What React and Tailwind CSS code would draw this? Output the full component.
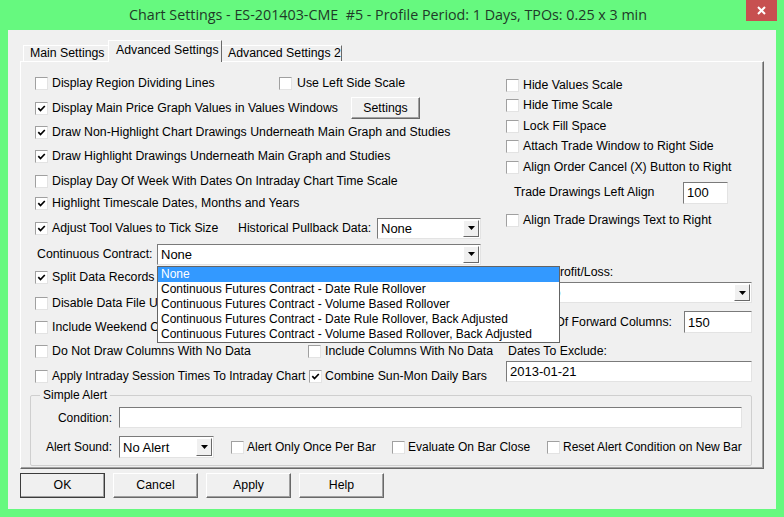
import React from 'react';

const Check = ({ checked }) => (
  <span className="inline-flex items-center justify-center w-[13px] h-[13px] shrink-0 bg-white border border-t-[#a0a0a0] border-l-[#a0a0a0] border-r-[#e3e3e3] border-b-[#e3e3e3]">
    {checked && (
      <svg width="9" height="9" viewBox="0 0 9 9">
        <path d="M1.3 4.2 L3.5 6.5 L7.8 2" fill="none" stroke="#000" strokeWidth="1.7" />
      </svg>
    )}
  </span>
);

const CheckItem = ({ checked, label, className = '', gap = 'gap-[4px]' }) => (
  <div className={`flex items-center whitespace-nowrap ${gap} ${className}`}>
    <Check checked={checked} />
    <span>{label}</span>
  </div>
);

const Arrow = () => (
  <span className="w-[16px] my-px mr-px flex items-center justify-center bg-[#f0f0f0] border border-t-white border-l-white border-r-[#696969] border-b-[#696969]">
    <svg width="7" height="4" viewBox="0 0 7 4">
      <path d="M0 0h7L3.5 4z" fill="#000" />
    </svg>
  </span>
);

const Select = ({ value, className = '' }) => (
  <div className={`flex items-stretch bg-white border border-t-[#7a7a7a] border-l-[#7a7a7a] border-r-[#e3e3e3] border-b-[#e3e3e3] ${className}`}>
    <span className="flex-1 pl-[3px] flex items-center whitespace-nowrap overflow-hidden text-[13px]">{value}</span>
    <Arrow />
  </div>
);

const TextBox = ({ value = '', className = '' }) => (
  <div className={`flex items-center pl-[3px] bg-white border border-t-[#7a7a7a] border-l-[#7a7a7a] border-r-[#e3e3e3] border-b-[#e3e3e3] text-[13px] ${className}`}>
    {value}
  </div>
);

const Button = ({ label, className = '' }) => (
  <div className={`flex items-center justify-center bg-[#f0f0f0] border border-t-white border-l-white border-r-[#696969] border-b-[#696969] shadow-[inset_-1px_-1px_0_#a0a0a0] ${className}`}>
    {label}
  </div>
);

const CONTRACT_OPTIONS = [
  'None',
  'Continuous Futures Contract - Date Rule Rollover',
  'Continuous Futures Contract - Volume Based Rollover',
  'Continuous Futures Contract - Date Rule Rollover, Back Adjusted',
  'Continuous Futures Contract - Volume Based Rollover, Back Adjusted',
];

export default function App() {
  return (
    <div className="w-[784px] h-[517px] bg-[#66f97f] flex flex-col font-['Liberation_Sans',Arial,sans-serif] text-[12.3px] text-black leading-none">
      {/* Title bar */}
      <div className="relative h-[30px] pr-[8px] flex items-center justify-center">
        <span className="font-['Open_Sans',sans-serif] text-[14.3px] text-[#1f3a28] whitespace-pre">
          Chart Settings - ES-201403-CME  #5 - Profile Period: 1 Days, TPOs: 0.25 x 3 min
        </span>
        <div className="absolute right-[7px] top-0 w-[31px] h-[21px] bg-[#c75050] flex items-center justify-center">
          <svg width="9" height="9" viewBox="0 0 9 9">
            <path d="M1 1L8 8M8 1L1 8" stroke="#fff" strokeWidth="2" />
          </svg>
        </div>
      </div>

      {/* Client area */}
      <div className="mx-[8px] h-[479px] bg-[#f0f0f0] flex flex-col">
        {/* Tabs */}
        <div className="ml-[15px] mt-[10px] h-[21px] flex items-end">
          <div className="w-[85px] h-[16px] pl-[6px] flex items-center border-t border-l border-t-white border-l-white">
            Main Settings
          </div>
          <div className="relative z-10 w-[114px] h-[22px] -mb-px pl-[7px] pb-[2px] flex items-center bg-[#f0f0f0] border-t border-l border-r border-t-white border-l-white border-r-[#696969]">
            Advanced Settings
          </div>
          <div className="w-[120px] h-[16px] pl-[6px] flex items-center border-t border-r border-t-white border-r-[#696969]">
            Advanced Settings 2
          </div>
        </div>

        {/* Tab panel */}
        <div className="ml-[12px] w-[744px] h-[408px] border border-t-white border-l-white border-r-[#696969] border-b-[#696969] shadow-[inset_-1px_-1px_0_#a0a0a0] pl-[14px] pt-[9px] flex flex-col">
          <div className="flex">
            {/* Left column */}
            <div className="w-[471px] flex flex-col">
              <div className="h-[24px] flex items-center">
                <CheckItem label="Display Region Dividing Lines" className="w-[244px]" />
                <CheckItem label="Use Left Side Scale" gap="gap-[5px]" />
              </div>
              <div className="h-[26px] flex items-center">
                <CheckItem checked label="Display Main Price Graph Values in Values Windows" className="w-[316px]" />
                <Button label="Settings" className="w-[69px] h-[22px]" />
              </div>
              <div className="h-[22px] flex items-center">
                <CheckItem checked label="Draw Non-Highlight Chart Drawings Underneath Main Graph and Studies" />
              </div>
              <div className="h-[26px] flex items-center">
                <CheckItem checked label="Draw Highlight Drawings Underneath Main Graph and Studies" />
              </div>
              <div className="h-[24px] flex items-center">
                <CheckItem label="Display Day Of Week With Dates On Intraday Chart Time Scale" />
              </div>
              <div className="h-[20px] flex items-center">
                <CheckItem checked label="Highlight Timescale Dates, Months and Years" />
              </div>
              <div className="h-[30px] flex items-center">
                <CheckItem checked label="Adjust Tool Values to Tick Size" className="w-[203px]" />
                <span className="w-[139px] whitespace-nowrap">Historical Pullback Data:</span>
                <Select value="None" className="w-[104px] h-[21px]" />
              </div>
              <div className="h-[22px] flex items-center">
                <span className="w-[122px] pl-[2px] whitespace-nowrap">Continuous Contract:</span>
                <div className="relative">
                  <Select value="None" className="w-[324px] h-[21px]" />
                  {/* Open dropdown list */}
                  <div className="absolute z-20 left-0 top-[22px] w-[403px] bg-white border border-[#646464] flex flex-col text-[12px]">
                    {CONTRACT_OPTIONS.map((opt, i) => (
                      <div
                        key={opt}
                        className={`h-[15px] pl-[3px] flex items-center whitespace-nowrap ${
                          i === 0 ? 'bg-[#3399ff] text-white' : ''
                        }`}
                      >
                        {opt}
                      </div>
                    ))}
                  </div>
                </div>
              </div>
              {/* these three rows run under the open list, so clip at its left edge */}
              <div className="h-[24px] flex items-center">
                <CheckItem checked label="Split Data Records" className="w-[122px] overflow-hidden" />
              </div>
              <div className="h-[28px] flex items-center">
                <CheckItem label="Disable Data File Updating" className="w-[122px] overflow-hidden" />
              </div>
              <div className="h-[20px] flex items-center">
                <CheckItem label="Include Weekend Columns" className="w-[122px] overflow-hidden" />
              </div>
              <div className="h-[28px] flex items-center">
                <CheckItem label="Do Not Draw Columns With No Data" className="w-[273px]" />
                <CheckItem label="Include Columns With No Data" gap="gap-[4px]" />
              </div>
              <div className="h-[22px] flex items-center">
                <CheckItem label="Apply Intraday Session Times To Intraday Chart" className="w-[274px] text-[12px]" />
                <CheckItem checked label="Combine Sun-Mon Daily Bars" gap="gap-[3px]" />
              </div>
            </div>

            {/* Right column */}
            <div className="w-[246px] pt-[4px] flex flex-col">
              <div className="h-[20px] flex items-center"><CheckItem label="Hide Values Scale" /></div>
              <div className="h-[21px] flex items-center"><CheckItem label="Hide Time Scale" /></div>
              <div className="h-[20px] flex items-center"><CheckItem label="Lock Fill Space" /></div>
              <div className="h-[21px] flex items-center"><CheckItem label="Attach Trade Window to Right Side" /></div>
              <div className="h-[21px] flex items-center"><CheckItem label="Align Order Cancel (X) Button to Right" /></div>
              <div className="h-[29px] flex items-center">
                <span className="w-[177px] pl-[8px] whitespace-nowrap">Trade Drawings Left Align</span>
                <TextBox value="100" className="w-[45px] h-[22px]" />
              </div>
              <div className="h-[26px] flex items-center"><CheckItem label="Align Trade Drawings Text to Right" /></div>
              <div className="mt-[31px] h-[16px] pl-[2px] flex items-center whitespace-nowrap">Display Profit/Loss:</div>
              <Select value="No Ratio" className="mt-[2px] w-[246px] h-[21px]" />
              <div className="mt-[8px] h-[22px] flex items-center">
                <span className="w-[178px] pl-[2px] whitespace-nowrap">Number Of Forward Columns:</span>
                <TextBox value="150" className="w-[68px] h-[22px]" />
              </div>
              <div className="mt-[10px] h-[16px] pl-[2px] flex items-center whitespace-nowrap">Dates To Exclude:</div>
              <TextBox value="2013-01-21" className="mt-[2px] w-[246px] h-[21px]" />
            </div>
          </div>

          {/* Simple Alert group */}
          <div className="relative mt-[8px] -ml-[5px] w-[722px] h-[71px] border border-[#cfcfcf] rounded-[2px] pt-[11px] flex flex-col text-[12px]">
            <span className="absolute left-[9px] -top-[7px] px-[3px] bg-[#f0f0f0]">Simple Alert</span>
            <div className="h-[21px] flex items-center">
              <span className="w-[88px] pr-[7px] text-right">Condition:</span>
              <TextBox className="w-[623px] h-[21px]" />
            </div>
            <div className="mt-[8px] h-[22px] flex items-center">
              <span className="w-[88px] pr-[7px] text-right whitespace-nowrap">Alert Sound:</span>
              <Select value="No Alert" className="w-[95px] h-[22px]" />
              <CheckItem label="Alert Only Once Per Bar" gap="gap-[3px]" className="ml-[17px] w-[161px]" />
              <CheckItem label="Evaluate On Bar Close" gap="gap-[3px]" className="w-[155px]" />
              <CheckItem label="Reset Alert Condition on New Bar" gap="gap-[3px]" />
            </div>
          </div>
        </div>

        {/* Dialog buttons */}
        <div className="ml-[12px] mt-[4px] flex gap-[8px]">
          <Button label="OK" className="w-[85px] h-[25px] outline outline-1 outline-[#3c3c3c] -outline-offset-1" />
          <Button label="Cancel" className="w-[85px] h-[25px]" />
          <Button label="Apply" className="w-[85px] h-[25px]" />
          <Button label="Help" className="w-[85px] h-[25px]" />
        </div>
      </div>
    </div>
  );
}
